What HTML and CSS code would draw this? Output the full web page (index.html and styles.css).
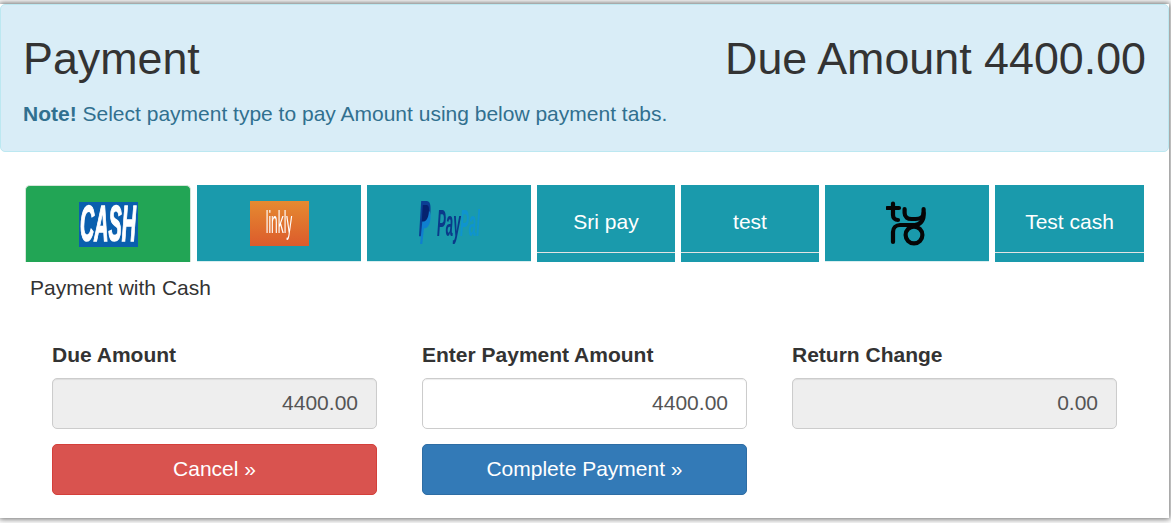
FILE: index.html

```html
<!DOCTYPE html>
<html lang="en">
<head>
  <meta charset="UTF-8">
  <meta name="viewport" content="width=device-width, initial-scale=1.0">
  <title>Payment</title>
  <link rel="stylesheet" href="styles.css">
</head>
<body>
  <div class="modal">
    <div class="alert">
      <div class="alert-head">
        <h1>Payment</h1>
        <h1>Due Amount 4400.00</h1>
      </div>
      <p><strong>Note!</strong> Select payment type to pay Amount using below payment tabs.</p>
    </div>

    <div class="tabs">
      <a class="tab tab-img tab-active w-cash">
        <span class="logo-cash"><span>CASH</span></span>
      </a>
      <a class="tab tab-img w-img">
        <span class="logo-linkly"><span>linkly</span></span>
      </a>
      <a class="tab tab-img w-img">
        <span class="logo-paypal">
          <svg viewBox="0 0 22 44" preserveAspectRatio="none">
            <path d="M4 0h10c6 0 8 4 7 11-1 8-6 12-12 12H7L5 36H0z" fill="#0b3f94"/>
            <path d="M8 10h9c3 0 5 3 4 8-1 7-6 10-11 10H9L6 44H2z" fill="#0f7fd0"/>
            <path d="M7 4h7c4 0 5 3 4 8-1 5-5 9-9 9H5z" fill="#06226f"/>
          </svg>
          <span class="pay">Pay</span><span class="pal">Pal</span>
        </span>
      </a>
      <a class="tab tab-text w-sm"><span>Sri pay</span></a>
      <a class="tab tab-text w-sm"><span>test</span></a>
      <a class="tab tab-img w-img">
        <svg class="logo-tyro" width="42" height="45" viewBox="0 0 42 45">
          <g fill="none" stroke="#050505" stroke-width="4.2" stroke-linecap="round">
            <path d="M1.5 7H13M7 2.5V14c0 3 2 5 5 5"/>
            <path d="M18.6 8v4c0 4 3 6 7 6h4c5 0 8-2 8-6"/>
            <path d="M37.6 8v6c0 6-4 10-9 10H14c-4 0-7 3-7 7v10"/>
            <circle cx="28" cy="34" r="8.4"/>
          </g>
        </svg>
      </a>
      <a class="tab tab-text w-lg"><span>Test cash</span></a>
    </div>

    <div class="method">Payment with Cash</div>

    <div class="fields">
      <div class="col">
        <label>Due Amount</label>
        <input class="input" type="text" value="4400.00" disabled>
        <button class="btn btn-danger">Cancel »</button>
      </div>
      <div class="col">
        <label>Enter Payment Amount</label>
        <input class="input" type="text" value="4400.00">
        <button class="btn btn-primary">Complete Payment »</button>
      </div>
      <div class="col">
        <label>Return Change</label>
        <input class="input" type="text" value="0.00" disabled>
      </div>
    </div>
  </div>
</body>
</html>
```

FILE: styles.css

```css
html, body {
  height: 100%;
}
body {
  font-family: "Liberation Sans", Arial, sans-serif;
  background-color: #fff;
  color: #333;
  margin: 0;
  padding: 4px 2px 5px 0;
  box-sizing: border-box;
  overflow: hidden;
}
.modal {
  height: 100%;
  background-color: #fff;
  box-shadow: 0 0 6px 1px rgba(0, 0, 0, 0.6);
}
.alert {
  height: 148px;
  box-sizing: border-box;
  background-color: #d9edf7;
  border: 1px solid #bce8f1;
  border-radius: 5px;
  padding: 28px 22px 0;
  color: #31708f;
}
.alert-head {
  display: flex;
  justify-content: space-between;
}
h1 {
  font-size: 44.8px;
  line-height: 50px;
  font-weight: 400;
  color: #333;
  margin: 0;
}
.alert p {
  font-size: 21px;
  line-height: 28px;
  margin: 17px 0 0;
}
.tabs {
  display: flex;
  gap: 6px;
  margin: 33px 0 0 25px;
}
.tab {
  display: block;
  height: 77px;
  box-sizing: border-box;
  background-color: #1a9aac;
  color: #fff;
  font-size: 21px;
}
.w-cash { width: 166px; }
.w-img { width: 164px; }
.w-sm { width: 138px; }
.w-lg { width: 149px; }
.tab-img {
  display: flex;
  align-items: center;
  justify-content: center;
  border-bottom: 1px solid #d8eef0;
}
.tab-active {
  background-color: #22a555;
  border: 1px solid #d5e6da;
  border-bottom: 0;
  border-radius: 5px 5px 0 0;
}
.tab-text span {
  display: flex;
  height: 68px;
  box-sizing: border-box;
  align-items: center;
  justify-content: center;
  border-bottom: 1px solid #e3e3e3;
  padding-top: 5px;
  line-height: 1;
}
.logo-cash {
  width: 59px;
  height: 45px;
  background-color: #0a5fae;
  display: flex;
  align-items: center;
  justify-content: center;
}
.logo-cash span {
  font-weight: 700;
  font-style: italic;
  font-size: 24px;
  line-height: 1;
  color: #fff;
  -webkit-text-stroke: 0.8px #fff;
  transform: scale(0.82, 2.1);
  filter: blur(0.3px);
}
.logo-linkly {
  width: 59px;
  height: 45px;
  background: linear-gradient(#e58a30, #dc5b2c);
  display: flex;
  align-items: center;
  justify-content: center;
}
.logo-linkly span {
  color: #fff;
  font-size: 18px;
  transform: scale(0.66, 1.7);
  filter: blur(0.3px);
}
.logo-paypal {
  width: 60px;
  height: 45px;
  display: flex;
  align-items: flex-start;
  font-weight: 700;
  font-style: italic;
  font-size: 22px;
  line-height: 1;
  filter: blur(0.4px);
}
.logo-paypal svg {
  width: 12px;
  height: 43px;
  flex: none;
  margin-right: 6px;
}
.logo-paypal .pay,
.logo-paypal .pal {
  display: inline-block;
  transform: scale(0.6, 1.64);
  transform-origin: left top;
  margin-top: 5px;
}
.logo-paypal .pay { width: 23px; color: #0a3a8a; }
.logo-paypal .pal { width: 19px; color: #0f94cf; }
.method {
  font-size: 21px;
  line-height: 24px;
  margin: 14px 0 0 30px;
}
.fields {
  display: flex;
  gap: 45px;
  margin: 43px 0 0 52px;
}
.col {
  width: 325px;
}
label {
  display: block;
  font-size: 21px;
  line-height: 24px;
  font-weight: 700;
  margin-bottom: 11px;
}
.input {
  display: block;
  width: 100%;
  height: 51px;
  box-sizing: border-box;
  border: 1px solid #ccc;
  border-radius: 5px;
  background-color: #fff;
  color: #555;
  font: 21px "Liberation Sans", Arial, sans-serif;
  text-align: right;
  padding: 0 18px 2px;
  box-shadow: inset 0 1px 1px rgba(0, 0, 0, 0.075);
}
.input:disabled {
  background-color: #eee;
  opacity: 1;
}
.btn {
  display: block;
  width: 100%;
  height: 51px;
  margin-top: 15px;
  padding-bottom: 3px;
  border: 1px solid;
  border-radius: 5px;
  color: #fff;
  font: 21px "Liberation Sans", Arial, sans-serif;
}
.btn-danger {
  background-color: #d9534f;
  border-color: #d43f3a;
}
.btn-primary {
  background-color: #337ab7;
  border-color: #2e6da4;
}
```
